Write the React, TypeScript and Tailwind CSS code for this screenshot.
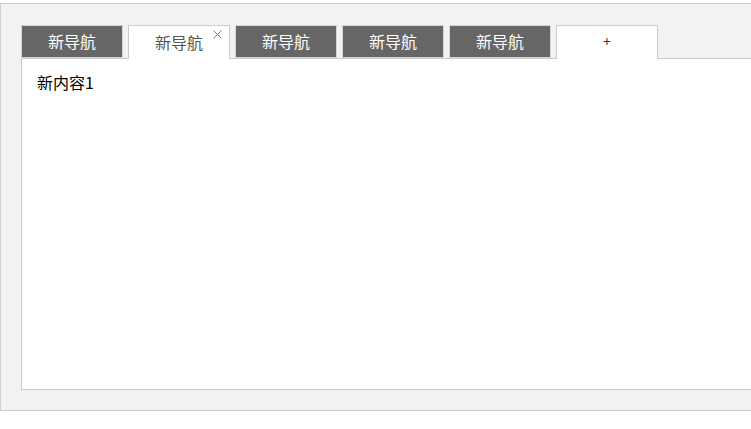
import { useState } from 'react';

const tabs = ['新导航', '新导航', '新导航', '新导航', '新导航'];

export default function App() {
  const [active, setActive] = useState(1);

  return (
    <div className="w-[751px] h-[429px] overflow-hidden bg-white pt-[3px] font-['Noto_Sans_CJK_SC','Microsoft_YaHei',sans-serif]">
      <div className="w-[800px] h-[408px] border border-[#cfcfcf] bg-[#f2f2f2] pt-[21px] pl-[20px]">
        {/* tab bar */}
        <div className="flex h-[34px] relative z-10">
          {tabs.map((label, i) =>
            i === active ? (
              <div
                key={i}
                className="relative mr-[5px] flex h-[34px] w-[102px] items-center justify-center border border-b-0 border-[#cccccc] bg-white pb-[2px] text-[16px] text-[#555]"
              >
                {label}
                <svg
                  className="absolute right-[7px] top-[4px]"
                  width="9"
                  height="9"
                  viewBox="0 0 9 9"
                  fill="none"
                  stroke="#777"
                  strokeWidth="1"
                >
                  <path d="M0.5 0.5 L8.5 8.5 M8.5 0.5 L0.5 8.5" />
                </svg>
              </div>
            ) : (
              <button
                key={i}
                onClick={() => setActive(i)}
                className="mr-[5px] flex h-[33px] w-[102px] items-center justify-center border border-[#d6d6d6] bg-[#666666] pb-[2px] text-[16px] text-white"
              >
                {label}
              </button>
            )
          )}
          <div className="flex h-[34px] w-[102px] items-center justify-center border border-b-0 border-[#cccccc] bg-white pb-[2px] text-[14px] text-[#333]">
            +
          </div>
        </div>
        {/* content */}
        <div className="-mt-px h-[332px] border border-[#cccccc] bg-white px-[15px] pt-[11px] text-[16px] text-black">
          新内容1
        </div>
      </div>
    </div>
  );
}
